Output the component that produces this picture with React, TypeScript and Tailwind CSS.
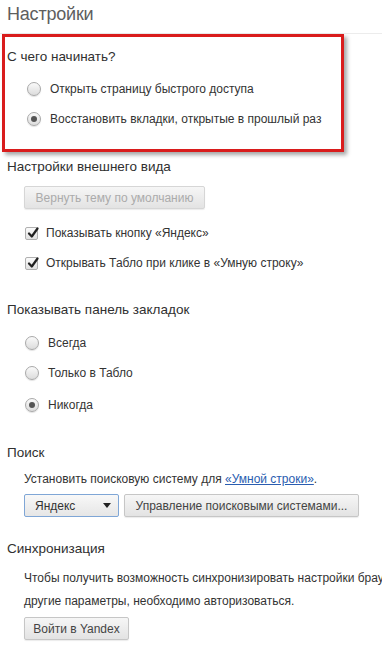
import type { ReactNode } from "react";

const font = { fontFamily: '"Liberation Sans", Arial, sans-serif' };

function Radio({ checked, children }: { checked?: boolean; children: ReactNode }) {
  return (
    <div className="flex h-[30px] items-center pl-[25px]">
      <span className="flex h-[14px] w-[14px] items-center justify-center rounded-full border border-[#a9a9a9] bg-gradient-to-b from-[#fafafa] to-[#dcdcdc] shadow-[0_1px_1px_rgba(0,0,0,0.12)]">
        {checked && <span className="h-[6px] w-[6px] rounded-full bg-[#555]" />}
      </span>
      <span className="ml-[9px] whitespace-nowrap text-[12px] text-[#333]">{children}</span>
    </div>
  );
}

function Check({ children }: { children: ReactNode }) {
  return (
    <div className="flex h-[30px] items-center pl-[25px]">
      <span className="relative flex h-[13px] w-[13px] items-center justify-center rounded-[2px] border border-[#b0b0b0] bg-gradient-to-b from-[#fbfbfb] to-[#e2e2e2]">
        <svg viewBox="0 0 12 12" className="absolute left-[1px] top-[-1px] h-[12px] w-[12px]">
          <path d="M2 6.5 L4.8 9.5 L10.5 1.5" fill="none" stroke="#222" strokeWidth="2.2" strokeLinecap="round" strokeLinejoin="round" />
        </svg>
      </span>
      <span className="ml-[8px] whitespace-nowrap text-[12px] text-[#333]">{children}</span>
    </div>
  );
}

function Heading({ children }: { children: ReactNode }) {
  return <div className="flex h-[30px] items-center whitespace-nowrap pl-[7px] text-[13.5px] text-[#303030]">{children}</div>;
}

const btn =
  "flex h-[23px] items-center whitespace-nowrap rounded-[2px] border border-[#c6c6c6] bg-gradient-to-b from-[#f6f6f6] to-[#e3e3e3] px-[10px] text-[12px] text-[#444] shadow-[0_1px_1px_rgba(0,0,0,0.08)]";

export default function App() {
  return (
    <div className="h-[654px] w-[382px] overflow-hidden bg-white" style={font}>
      <div className="h-[34px] border-b border-[#ececec] pl-[7px] pt-[1px] text-[18px] leading-[26px] tracking-[-0.2px] text-[#5e5e5e]">
        Настройки
      </div>

      <div className="ml-[2px] h-[118px] w-[342px] border-[3px] border-[#d91c1c] pl-[2px] pt-[10px] shadow-[3px_3px_4px_rgba(0,0,0,0.35)]">
        <div className="flex h-[20px] items-center text-[13.5px] text-[#303030]">С чего начинать?</div>
        <div className="mt-[7px] -ml-[5px]">
          <Radio>Открыть страницу быстрого доступа</Radio>
          <Radio checked>Восстановить вкладки, открытые в прошлый раз</Radio>
        </div>
      </div>

      <Heading>Настройки внешнего вида</Heading>
      <div className="mt-[4px] pl-[24px]">
        <div className={btn + " h-[22px] w-[181px] justify-center border-[#d6d6d6] text-[#ababab]"}>Вернуть тему по умолчанию</div>
      </div>
      <div className="mt-[9px]">
        <Check>Показывать кнопку «Яндекс»</Check>
        <Check>Открывать Табло при клике в «Умную строку»</Check>
      </div>

      <div className="mt-[17px]">
        <Heading>Показывать панель закладок</Heading>
      </div>
      <div className="mt-[3px]">
        <Radio>Всегда</Radio>
        <Radio>Только в Табло</Radio>
        <div className="mt-[2px]">
          <Radio checked>Никогда</Radio>
        </div>
      </div>

      <div className="mt-[18px]">
        <Heading>Поиск</Heading>
      </div>
      <div className="flex h-[22px] items-center whitespace-nowrap pl-[24px] text-[12px] text-[#333]">
        Установить поисковую систему для&nbsp;
        <span className="text-[#2a5db0] underline">«Умной строки»</span>.
      </div>
      <div className="mt-[4px] flex gap-[5px] pl-[24px]">
        <div className="flex h-[23px] w-[95px] items-center justify-between rounded-[2px] border border-[#7fa6d6] bg-gradient-to-b from-[#f8f8f8] to-[#e6e6e6] pl-[10px] pr-[7px] text-[12px] text-[#333]">
          <span>Яндекс</span>
          <svg viewBox="0 0 8 5" className="h-[5px] w-[8px]">
            <path d="M0 0 H8 L4 5 Z" fill="#222" />
          </svg>
        </div>
        <div className={btn + " w-[235px] justify-center"}>Управление поисковыми системами...</div>
      </div>

      <div className="mt-[17px]">
        <Heading>Синхронизация</Heading>
      </div>
      <div className="mt-[3px] whitespace-nowrap pl-[24px] text-[12px] leading-[23px] text-[#333]">
        <div>Чтобы получить возможность синхронизировать настройки браузера и</div>
        <div>другие параметры, необходимо авторизоваться.</div>
      </div>
      <div className="mt-[4px] pl-[24px]">
        <div className={btn + " h-[22px] w-[105px] justify-center"}>Войти в Yandex</div>
      </div>
    </div>
  );
}
